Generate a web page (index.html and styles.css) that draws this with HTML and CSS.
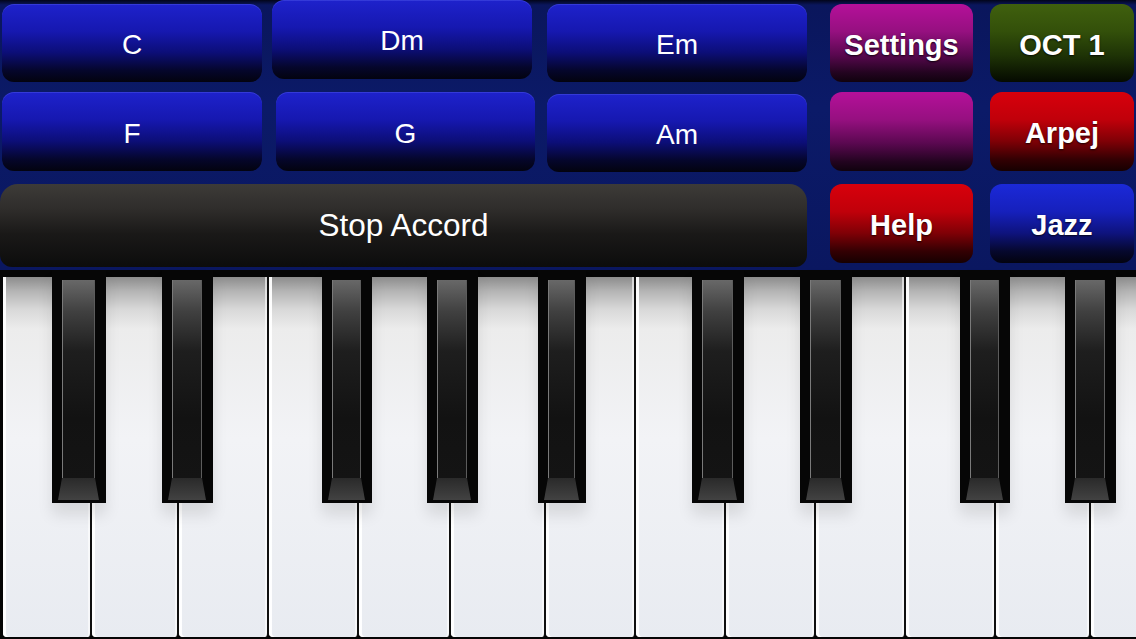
FILE: index.html
```html
<!DOCTYPE html>
<html>
<head>
<meta charset="utf-8">
<link rel="stylesheet" href="styles.css">
</head>
<body>
<div class="app">
  <div class="panel">
    <div class="btn chord c1">C</div>
    <div class="btn chord c2 dm">Dm</div>
    <div class="btn chord c3">Em</div>
    <div class="btn opt c4 magenta">Settings</div>
    <div class="btn opt c5 green">OCT 1</div>

    <div class="btn chord c1">F</div>
    <div class="btn chord c2 g">G</div>
    <div class="btn chord c3 am">Am</div>
    <div class="btn opt c4 magenta"></div>
    <div class="btn opt c5 red">Arpej</div>

    <div class="btn stop r3">Stop Accord</div>
    <div class="btn opt c4 r3 small red">Help</div>
    <div class="btn opt c5 r3 small blue">Jazz</div>
  </div>

  <div class="keyboard">
    <div class="whites">
      <div class="wk"></div><div class="wk"></div><div class="wk"></div><div class="wk"></div>
      <div class="wk"></div><div class="wk"></div><div class="wk"></div><div class="wk"></div>
      <div class="wk"></div><div class="wk"></div><div class="wk"></div><div class="wk"></div>
      <div class="wk"></div>
    </div>
    <div class="bk b1"><div class="bk-body"></div><div class="bk-bevel"></div></div>
    <div class="bk b2"><div class="bk-body"></div><div class="bk-bevel"></div></div>
    <div class="bk b3"><div class="bk-body"></div><div class="bk-bevel"></div></div>
    <div class="bk b4"><div class="bk-body"></div><div class="bk-bevel"></div></div>
    <div class="bk b5"><div class="bk-body"></div><div class="bk-bevel"></div></div>
    <div class="bk b6"><div class="bk-body"></div><div class="bk-bevel"></div></div>
    <div class="bk b7"><div class="bk-body"></div><div class="bk-bevel"></div></div>
    <div class="bk b8"><div class="bk-body"></div><div class="bk-bevel"></div></div>
    <div class="bk b9"><div class="bk-body"></div><div class="bk-bevel"></div></div>
  </div>
</div>
</body>
</html>
```

FILE: styles.css
```css
* { box-sizing: border-box; }
html, body { margin: 0; padding: 0; background: #000; }
.app {
  width: 1136px;
  height: 639px;
  overflow: hidden;
  font-family: "Liberation Sans", Arial, sans-serif;
  display: flex;
  flex-direction: column;
}
.panel {
  height: 270px;
  flex: 0 0 270px;
  padding: 4px 2px 0 2px;
  background: linear-gradient(to bottom, #02051a 0, #0a165c 5px, #0b1a68 40%, #0a1760 100%);
  display: grid;
  grid-template-columns: 270px 275px 283px 160px 144px;
  grid-template-rows: 78px 79px 86px;
  row-gap: 10px;
  column-gap: 0;
}
.btn {
  display: flex;
  align-items: center;
  justify-content: center;
  color: #fff;
  border-radius: 12px;
  padding-top: 4px;
}
.c1 { margin-right: 10px; }
.c2 { margin-right: 15px; }
.c3 { margin-right: 23px; }
.c4 { margin-right: 17px; }
.c5 { margin-right: 0; }
.r3 { margin-top: 3px; }
.small { height: 79px; align-self: start; }

.chord {
  font-size: 28px;
  background: linear-gradient(to bottom, #1e22cc 0%, #1618b0 35%, #0c0e78 62%, #05062c 85%, #03030f 100%);
  box-shadow: inset 0 1px 0 rgba(120,130,255,0.25);
}
.dm { margin-top: -4px; margin-bottom: 3px; padding-top: 3px; }
.g { margin-left: 4px; margin-right: 12px; }
.am { margin-top: 2px; margin-bottom: -1px; }

.opt {
  font-size: 29px;
  font-weight: bold;
  text-shadow: 0 1px 2px rgba(0,0,0,0.8);
}
.magenta { background: linear-gradient(to bottom, #b5109a 0%, #961080 35%, #5a0850 65%, #230420 88%, #10020e 100%); }
.green { background: linear-gradient(to bottom, #40600e 0%, #33500a 35%, #1f3406 65%, #0c1602 90%, #050a01 100%); }
.red { background: linear-gradient(to bottom, #d8000c 0%, #c0000a 35%, #800006 62%, #340003 85%, #160001 100%); }
.blue { background: linear-gradient(to bottom, #1b29d8 0%, #1620bc 35%, #0e137e 62%, #06082e 85%, #03030f 100%); }

.stop {
  grid-column: 1 / span 3;
  margin-left: -2px;
  margin-right: 23px;
  padding-top: 0;
  border-radius: 18px 18px 12px 12px;
  font-size: 31.5px;
  background: linear-gradient(to bottom, #3d3b38 0%, #2f2d2b 30%, #1a1918 60%, #0c0c0c 100%);
}

.keyboard {
  position: relative;
  flex: 1;
  background: #050505;
  padding: 7px 0 0 3px;
}
.whites {
  display: flex;
  height: 360px;
}
.wk {
  flex: 0 0 90px;
  height: 100%;
  border-right: 2px solid #101010;
  border-radius: 0 0 4px 4px;
  background: linear-gradient(to bottom, #8c8c8c 0, #b4b4b4 14px, #d8d8d8 32px, #ececec 52px, #f2f3f6 45%, #e8ebf1 100%);
  box-shadow: inset 3px 0 0 rgba(255,255,255,0.95), inset -2px 0 0 rgba(255,255,255,0.6);
}
.wk:nth-child(1) { flex-basis: 89px; }
.wk:nth-child(2) { flex-basis: 87px; }
.wk:nth-child(5) { flex-basis: 92px; }
.wk:nth-child(6) { flex-basis: 95px; }
.wk:nth-child(12) { flex-basis: 95px; }

.bk {
  position: absolute;
  top: 0;
  height: 233px;
  width: 52px;
  background: #060606;
  padding: 10px 11px 3px 10px;
  display: flex;
  flex-direction: column;
  box-shadow: 0 12px 14px rgba(0,0,0,0.10);
}
.bk-body {
  flex: 1;
  background: linear-gradient(to bottom, #686868 0%, #404040 16%, #1e1e1e 36%, #121212 70%, #141414 100%);
  border-left: 1px solid #7a7a7a;
  border-right: 1px solid #5c5c5c;
}
.bk-bevel {
  height: 22px;
  margin: 0 -4px;
  background: linear-gradient(to bottom, #2a2a2a, #424242);
  clip-path: polygon(4px 0, calc(100% - 4px) 0, 100% 100%, 0 100%);
}
.b1 { left: 52px; width: 54px; }
.b2 { left: 162px; width: 51px; }
.b3 { left: 322px; width: 50px; }
.b4 { left: 427px; width: 51px; }
.b5 { left: 538px; width: 48px; }
.b6 { left: 692px; width: 52px; }
.b7 { left: 800px; width: 52px; }
.b8 { left: 960px; width: 50px; }
.b9 { left: 1065px; width: 51px; }
```
